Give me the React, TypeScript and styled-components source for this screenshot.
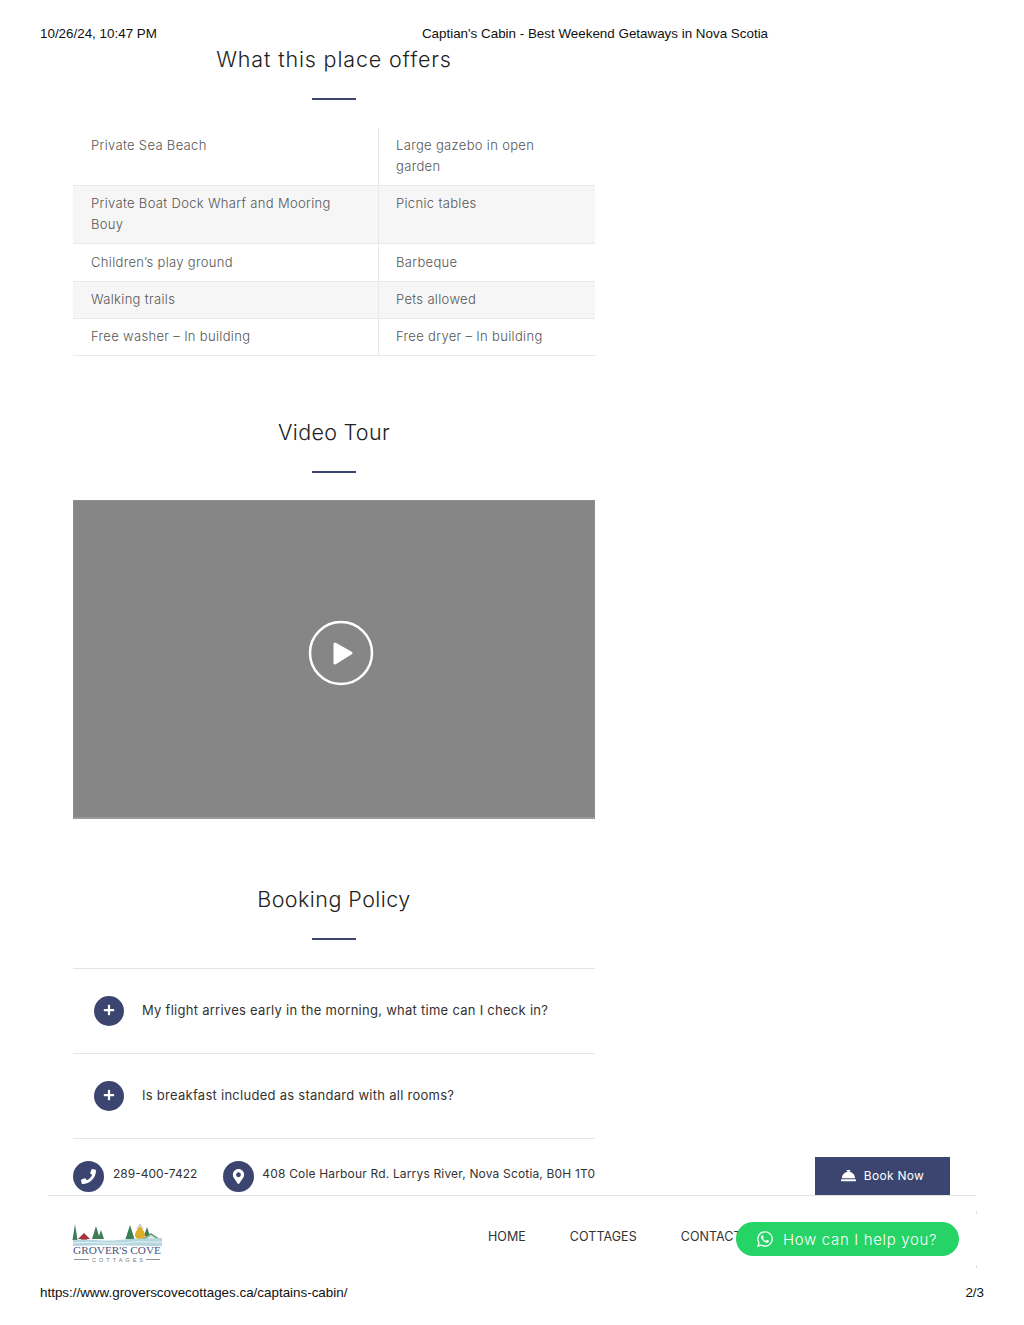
import React from 'react';
import styled, { createGlobalStyle } from 'styled-components';
import { FaWhatsapp, FaPhone, FaMapMarkerAlt, FaConciergeBell, FaPlus } from 'react-icons/fa';

const Global = createGlobalStyle`
  html, body { margin: 0; padding: 0; background: #fff; }
  body { font-family: Inter, "Liberation Sans", sans-serif; }
`;

const navy = '#3b4570';

const Page = styled.div`
  position: relative;
  width: 1024px;
  height: 1325px;
  overflow: hidden;
  display: flex;
  flex-direction: column;
  background: #fff;
`;

const PrintHeader = styled.header`
  height: 47px;
  box-sizing: border-box;
  padding: 26px 0 0 40px;
  display: flex;
  font: 13.4px/16px "Liberation Sans", Arial, sans-serif;
  color: #111;
`;
const PrintTitle = styled.span`
  margin-left: 265px;
`;

const Main = styled.main`
  width: 522px;
  margin-left: 73px;
  display: flex;
  flex-direction: column;
`;

const SectionHead = styled.div<{ $top: number; $bottom?: number }>`
  margin-top: ${p => p.$top}px;
  margin-bottom: ${p => p.$bottom ?? 28}px;
  display: flex;
  flex-direction: column;
  align-items: center;
  gap: 27px;
`;
const Title = styled.h2<{ $tracking: number }>`
  margin: 0;
  font-size: 21.5px;
  line-height: 24px;
  font-weight: 300;
  letter-spacing: ${p => p.$tracking}px;
  color: #222;
  white-space: nowrap;
`;
const Rule = styled.span`
  width: 44px;
  height: 2px;
  background: ${navy};
`;

const Table = styled.div`
  display: grid;
  grid-template-columns: 305px 217px;
`;
const Cell = styled.div<{ $shade: boolean; $right?: boolean; $tall?: boolean }>`
  box-sizing: border-box;
  padding: ${p => (p.$tall ? '8px' : '7px')} 18px 8px 18px;
  font-size: 13px;
  line-height: 21px;
  font-weight: 300;
  letter-spacing: 0.33px;
  color: #555;
  border-bottom: 1px solid #e9e9e9;
  background: ${p => (p.$shade ? '#f6f6f6' : '#fff')};
  ${p => (p.$right ? 'border-left: 1px solid #e9e9e9; padding-left: 17px;' : '')}
`;

const Video = styled.div`
  height: 319px;
  box-sizing: border-box;
  background: #868686;
  border: 1px solid #8f8f8f;
  border-bottom: 2px solid #999;
  display: flex;
  align-items: center;
  justify-content: center;
  padding: 0 0 12px 13px;
`;

const Accordion = styled.div`
  border-top: 1px solid #e5e5e5;
  display: flex;
  flex-direction: column;
`;
const Question = styled.div`
  height: 85px;
  box-sizing: border-box;
  border-bottom: 1px solid #e5e5e5;
  display: flex;
  align-items: center;
  padding-left: 21px;
  gap: 18px;
`;
const PlusBadge = styled.span`
  width: 30px;
  height: 30px;
  border-radius: 50%;
  background: ${navy};
  color: #fff;
  display: flex;
  align-items: center;
  justify-content: center;
  padding-bottom: 3px;
  box-sizing: border-box;
  font-size: 12px;
`;
const QuestionText = styled.span`
  font-size: 13px;
  letter-spacing: 0.27px;
  color: #333;
  padding-bottom: 2px;
`;

const ContactBar = styled.div`
  margin: 18px 0 0 48px;
  width: 928px;
  height: 39px;
  box-sizing: border-box;
  border-bottom: 1px solid #e2e2e2;
  padding: 0 26px 0 25px;
  display: flex;
  align-items: flex-start;
`;
const ContactItem = styled.div<{ $inner: number; $gap: number }>`
  display: flex;
  align-items: center;
  gap: ${p => p.$inner}px;
  height: 38px;
  margin-right: ${p => p.$gap}px;
`;
const ContactIcon = styled.span`
  width: 31px;
  height: 31px;
  border-radius: 50%;
  background: ${navy};
  color: #fff;
  display: flex;
  align-items: center;
  justify-content: center;
  font-size: 15px;
`;
const ContactText = styled.span<{ $tracking: number }>`
  font-size: 12px;
  letter-spacing: ${p => p.$tracking}px;
  color: #333;
  white-space: nowrap;
  padding-bottom: 5px;
`;
const BookButton = styled.button`
  margin-left: auto;
  width: 135px;
  height: 38px;
  border: 0;
  padding: 0 0 1px;
  background: ${navy};
  color: #fff;
  font: 400 12px Inter, sans-serif;
  letter-spacing: 0.3px;
  display: flex;
  align-items: center;
  justify-content: center;
  gap: 8px;
  svg { font-size: 15px; }
`;

const SiteNav = styled.div`
  height: 79px;
  padding: 26px 0 0 73px;
  box-sizing: border-box;
  display: flex;
  align-items: flex-start;
`;
const Logo = styled.svg`
  width: 90px;
  height: 44px;
  flex: none;
  overflow: visible;
`;
const NavLinks = styled.nav`
  margin-left: 325px;
  margin-top: 7px;
  display: flex;
  gap: 44px;
  font-size: 12.5px;
  line-height: 16px;
  letter-spacing: 0.05px;
  color: #333;
`;

const PrintFooter = styled.footer`
  padding: 10px 40px 0;
  display: flex;
  justify-content: space-between;
  font: 13.4px/16px "Liberation Sans", Arial, sans-serif;
  color: #111;
`;

const WhatsApp = styled.div`
  position: absolute;
  left: 736px;
  top: 1222px;
  width: 223px;
  height: 34px;
  border-radius: 17px;
  background: #25d366;
  color: #fff;
  display: flex;
  align-items: center;
  padding-left: 20px;
  box-sizing: border-box;
  gap: 9px;
  font-size: 15px;
  font-weight: 300;
  letter-spacing: 0.66px;
  svg { font-size: 18px; }
`;

const Tick = styled.span<{ $top: number }>`
  position: absolute;
  left: 976px;
  top: ${p => p.$top}px;
  width: 1px;
  height: 3px;
  background: #ddd;
`;

const rows: [string, string][] = [
  ['Private Sea Beach', 'Large gazebo in open garden'],
  ['Private Boat Dock Wharf and Mooring Bouy', 'Picnic tables'],
  ['Children’s play ground', 'Barbeque'],
  ['Walking trails', 'Pets allowed'],
  ['Free washer – In building', 'Free dryer – In building'],
];

const questions = [
  'My flight arrives early in the morning, what time can I check in?',
  'Is breakfast included as standard with all rooms?',
];

const Tree = ({ x, top, base, w }: { x: number; top: number; base: number; w: number }) => (
  <polygon points={`${x},${top} ${x + w},${base} ${x - w},${base}`} fill="#3f7d58" />
);

export default function App() {
  return (
    <Page>
      <Global />
      <PrintHeader>
        <span>10/26/24, 10:47 PM</span>
        <PrintTitle>Captian's Cabin - Best Weekend Getaways in Nova Scotia</PrintTitle>
      </PrintHeader>
      <Main>
        <SectionHead $top={0}>
          <Title $tracking={0.85}>What this place offers</Title>
          <Rule />
        </SectionHead>
        <Table>
          {rows.map(([a, b], i) => (
            <React.Fragment key={a}>
              <Cell $shade={i % 2 === 1} $tall={i === 2}>{a}</Cell>
              <Cell $shade={i % 2 === 1} $tall={i === 2} $right>{b}</Cell>
            </React.Fragment>
          ))}
        </Table>
        <SectionHead $top={64} $bottom={27}>
          <Title $tracking={0.3}>Video Tour</Title>
          <Rule />
        </SectionHead>
        <Video>
          <svg width="66" height="66" viewBox="0 0 66 66">
            <circle cx="33" cy="33" r="31" fill="none" stroke="#fff" strokeWidth="2.5" />
            <path d="M27 24 L43 33 L27 43 Z" fill="#fff" stroke="#fff" strokeWidth="3" strokeLinejoin="round" />
          </svg>
        </Video>
        <SectionHead $top={68}>
          <Title $tracking={0.45}>Booking Policy</Title>
          <Rule />
        </SectionHead>
        <Accordion>
          {questions.map(q => (
            <Question key={q}>
              <PlusBadge><FaPlus /></PlusBadge>
              <QuestionText>{q}</QuestionText>
            </Question>
          ))}
        </Accordion>
      </Main>
      <ContactBar>
        <ContactItem $inner={9} $gap={26}>
          <ContactIcon><FaPhone /></ContactIcon>
          <ContactText $tracking={0}>289-400-7422</ContactText>
        </ContactItem>
        <ContactItem $inner={8} $gap={0}>
          <ContactIcon><FaMapMarkerAlt /></ContactIcon>
          <ContactText $tracking={0.17}>408 Cole Harbour Rd. Larrys River, Nova Scotia, B0H 1T0</ContactText>
        </ContactItem>
        <BookButton><FaConciergeBell />Book Now</BookButton>
      </ContactBar>
      <SiteNav>
        <Logo viewBox="0 0 90 44">
          <Tree x={2} top={2} base={18} w={2.5} />
          <Tree x={23} top={4} base={17} w={4} />
          <Tree x={28} top={8} base={17} w={3} />
          <Tree x={57} top={3} base={17} w={4.5} />
          <Tree x={74} top={5} base={14} w={3} />
          <path d="M5 17 L11 11 L17 17 Z" fill="#a8323e" />
          <rect x="8" y="15" width="6" height="3" fill="#a8323e" />
          <path d="M64 7 L67 2 L70 7" fill="none" stroke="#bbb" strokeWidth="1" />
          <path d="M67 4 C70 8 72 10 72 13 C72 16 70 17 67 17 C64 17 62 16 62 13 C62 10 64 8 67 4 Z" fill="#dcae25" />
          <path d="M69 17 L78 11 L87 17 Z" fill="#6d9c78" />
          <path d="M72 17 L78 13 L84 17 Z" fill="#dfe9e2" />
          <path d="M0 18 C16 16 30 20 46 18 C60 16 74 17 89 16 L89 24 C70 25 40 22 0 24 Z" fill="#b5d5df" />
          <path d="M0 21 C20 19 40 23 60 20 C70 19 80 21 89 20" fill="none" stroke="#e9f3f6" strokeWidth="1" />
          <text x="0" y="32" fontFamily="Liberation Serif, serif" fontSize="10.6" fill="#4a5480" textLength="88" lengthAdjust="spacingAndGlyphs">GROVER'S COVE</text>
          <path d="M1 37.5 H16 M73 37.5 H87" stroke="#667" strokeWidth="0.7" />
          <text x="19" y="39.5" fontFamily="Liberation Sans, sans-serif" fontSize="5.5" fill="#777" textLength="51">COTTAGES</text>
        </Logo>
        <NavLinks>
          <span>HOME</span>
          <span>COTTAGES</span>
          <span>CONTACT</span>
        </NavLinks>
      </SiteNav>
      <PrintFooter>
        <span>https://www.groverscovecottages.ca/captains-cabin/</span>
        <span>2/3</span>
      </PrintFooter>
      <WhatsApp><FaWhatsapp />How can I help you?</WhatsApp>
      <Tick $top={1211} />
      <Tick $top={1265} />
    </Page>
  );
}
